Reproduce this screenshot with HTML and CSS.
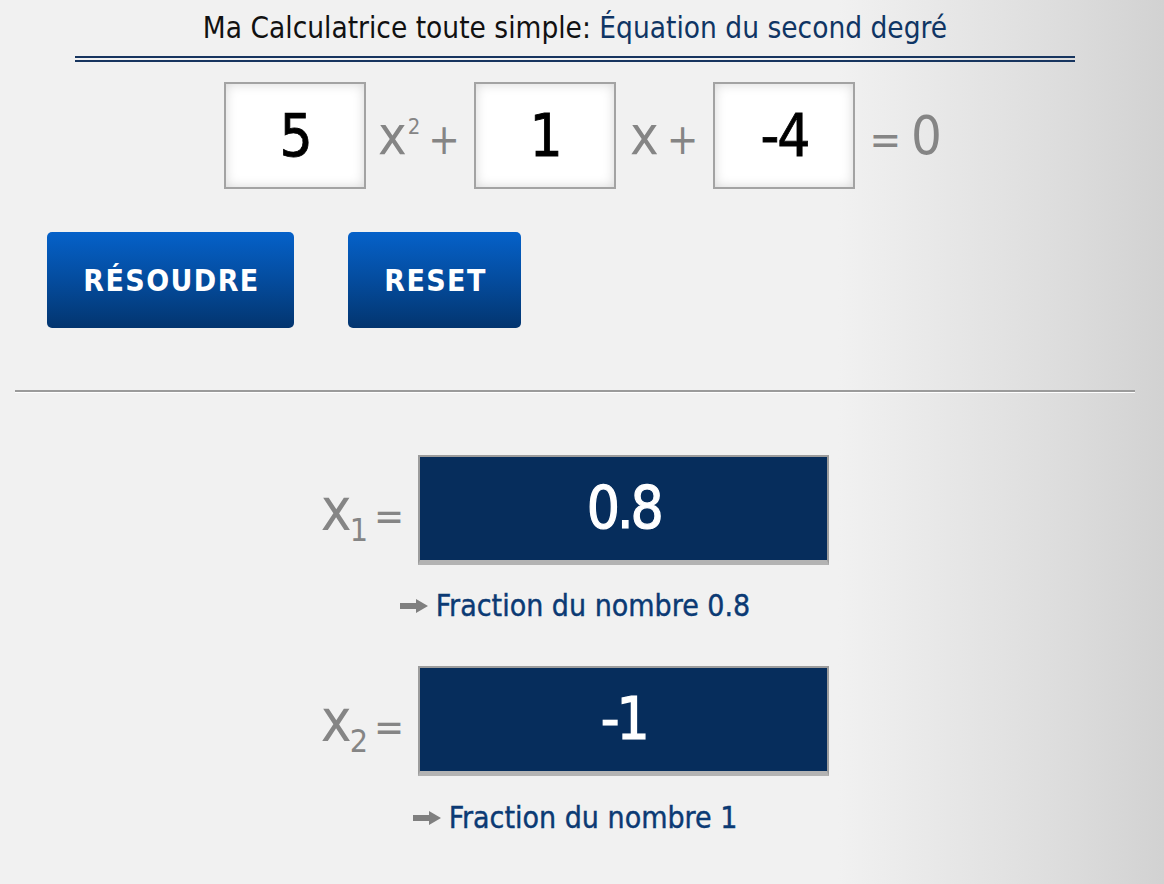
FILE: index.html
```html
<!DOCTYPE html>
<html lang="fr">
<head>
<meta charset="utf-8">
<title>Équation du second degré</title>
<link rel="stylesheet" href="styles.css">
</head>
<body>
<main class="calc">
  <h1 class="title">Ma Calculatrice toute simple: <span class="accent">Équation du second degré</span></h1>
  <div class="double-rule"></div>

  <div class="equation">
    <div class="coef">5</div>
    <span class="term"><span class="var">x</span><sup class="pow">2</sup><span class="op">+</span></span>
    <div class="coef">1</div>
    <span class="term term-mid"><span class="var">x</span><span class="op">+</span></span>
    <div class="coef">-4</div>
    <span class="term term-end"><span class="op">=</span><span class="zero">0</span></span>
  </div>

  <div class="actions">
    <button class="btn btn-solve">RÉSOUDRE</button>
    <button class="btn btn-reset">RESET</button>
  </div>

  <hr class="sep">

  <section class="results">
    <div class="root">
      <span class="root-label"><span class="var">x</span><sub class="idx">1</sub><span class="eq">=</span></span>
      <div class="root-value">0.8</div>
    </div>
    <a class="fraction" href="#"><svg class="arrow" viewBox="0 0 28 14" width="28" height="14"><path d="M0 4h16V0l12 7-12 7v-4H0z"/></svg><span>Fraction du nombre 0.8</span></a>

    <div class="root root-2">
      <span class="root-label"><span class="var">x</span><sub class="idx">2</sub><span class="eq">=</span></span>
      <div class="root-value">-1</div>
    </div>
    <a class="fraction fraction-2" href="#"><svg class="arrow" viewBox="0 0 28 14" width="28" height="14"><path d="M0 4h16V0l12 7-12 7v-4H0z"/></svg><span>Fraction du nombre 1</span></a>
  </section>
</main>
</body>
</html>
```

FILE: styles.css
```css
html, body {
  margin: 0;
  padding: 0;
}

body {
  min-height: 884px;
  background: linear-gradient(to right, #f1f1f1 0%, #f1f1f1 72%, #dedede 90%, #d2d2d2 100%);
  font-family: "DejaVu Sans Condensed", "Liberation Sans", sans-serif;
  font-stretch: condensed;
}

.calc {
  width: 1120px;
  margin-left: 15px;
  padding-top: 10px;
}

.title {
  margin: 0;
  font-size: 29.5px;
  line-height: 36px;
  font-weight: normal;
  text-align: center;
  color: #111;
  letter-spacing: 0;
}

.accent {
  color: #0f3564;
}

.double-rule {
  margin: 10px 60px 0;
  height: 2px;
  border-top: 2px solid #17355f;
  border-bottom: 2px solid #17355f;
}

.equation {
  margin-top: 20px;
  display: flex;
  justify-content: center;
  align-items: center;
  padding-left: 16px;
}

.coef {
  width: 142px;
  height: 107px;
  box-sizing: border-box;
  border: 2px solid #a3a3a3;
  background: #fff;
  box-shadow: inset 0 0 12px rgba(0, 0, 0, 0.16);
  display: flex;
  align-items: center;
  justify-content: center;
  font-size: 58px;
  letter-spacing: -2px;
  color: #000;
  -webkit-text-stroke: 0.8px #000;
}

.term {
  color: #858585;
  margin: 0 14px 0 12px;
  white-space: nowrap;
  line-height: 1;
}

.term .var {
  font-size: 54px;
}

.term .pow {
  font-size: 22px;
  vertical-align: 20px;
  line-height: 0;
  margin-left: 1px;
}

.term .op {
  font-size: 42px;
  margin-left: 8px;
}

.term .pow + .op {
  margin-left: 8px;
}

.term-mid {
  margin-left: 14px;
  margin-right: 15px;
}

.term-end {
  margin-left: 14px;
  margin-right: 0;
}

.term-end .op {
  margin-left: 0;
  margin-right: 10px;
}

.term .zero {
  font-size: 54px;
}

.actions {
  margin-top: 43px;
  padding-left: 32px;
  display: flex;
  gap: 54px;
}

.btn {
  height: 96px;
  border: none;
  border-radius: 5px;
  background: linear-gradient(to bottom, #0561c9 0%, #044c9e 50%, #03356f 100%);
  color: #fff;
  font-family: inherit;
  font-stretch: condensed;
  font-weight: bold;
  font-size: 30px;
  letter-spacing: 1.4px;
  padding: 0 0 0 2px;
  cursor: pointer;
}

.btn-solve {
  width: 247px;
}

.btn-reset {
  width: 173px;
}

.sep {
  margin: 62px 0 0;
  height: 0;
  border: none;
  border-top: 2px solid #9b9b9b;
  border-bottom: 1px solid #ffffff;
}

.results {
  display: flex;
  flex-direction: column;
  align-items: center;
  margin-top: 62px;
}

.root {
  display: flex;
  align-items: center;
}

.root-2 {
  margin-top: 42px;
}

.root-label {
  color: #858585;
  margin-right: 14px;
  line-height: 1;
  white-space: nowrap;
}

.root-label .var {
  font-size: 58px;
}

.root-label .idx {
  font-size: 32px;
  vertical-align: -11px;
  line-height: 0;
  margin-left: -2px;
}

.root-label .eq {
  font-size: 40px;
  margin-left: 6px;
}

.root-value {
  width: 411px;
  height: 110px;
  box-sizing: border-box;
  border: 2px solid #9c9c9c;
  border-bottom: 5px solid #b3b3b3;
  background: #062d5c;
  color: #fff;
  display: flex;
  align-items: center;
  justify-content: center;
  font-size: 58px;
  letter-spacing: -3px;
  padding-bottom: 2px;
  -webkit-text-stroke: 1.2px #fff;
}

.fraction {
  margin-top: 23px;
  display: flex;
  align-items: center;
  gap: 8px;
  font-size: 30px;
  line-height: 36px;
  color: #0b3a74;
  text-decoration: none;
  -webkit-text-stroke: 0.4px #0b3a74;
}

.fraction-2 {
  margin-top: 24px;
}

.arrow {
  fill: #7f7f7f;
  flex: none;
}
```
